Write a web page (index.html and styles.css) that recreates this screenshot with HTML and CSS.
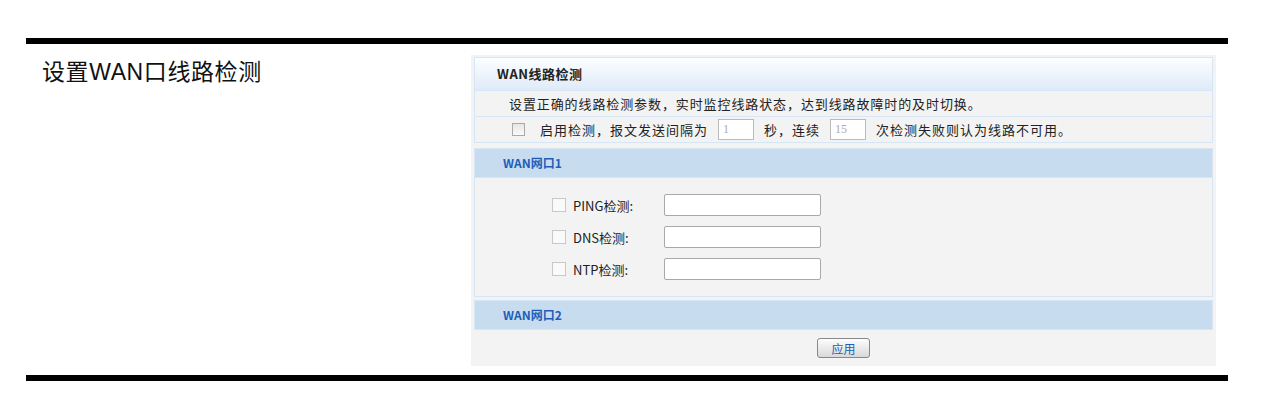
FILE: index.html
```html
<!DOCTYPE html>
<html lang="zh-CN">
<head>
    <meta charset="UTF-8">
    <title>设置WAN口线路检测</title>
    <link rel="stylesheet" href="styles.css">
</head>
<body>

    <div class="rule"></div>

    <div class="row">
        <h1 class="caption">设置WAN口线路检测</h1>

        <div class="panel">
            <div class="box">
                <div class="box-head">WAN线路检测</div>
                <div class="line desc">设置正确的线路检测参数，实时监控线路状态，达到线路故障时的及时切换。</div>
                <div class="line opts">
                    <span class="chk chk-top"></span>
                    <span>启用检测，报文发送间隔为</span>
                    <span class="num">1</span>
                    <span>秒，连续</span>
                    <span class="num">15</span>
                    <span>次检测失败则认为线路不可用。</span>
                </div>
            </div>

            <div class="band">WAN网口1</div>
            <div class="port">
                <div class="item">
                    <span class="chk"></span>
                    <span class="lbl">PING检测:</span>
                    <span class="field"></span>
                </div>
                <div class="item">
                    <span class="chk"></span>
                    <span class="lbl">DNS检测:</span>
                    <span class="field"></span>
                </div>
                <div class="item">
                    <span class="chk"></span>
                    <span class="lbl">NTP检测:</span>
                    <span class="field"></span>
                </div>
            </div>

            <div class="band band2">WAN网口2</div>

            <div class="actions">
                <button class="btn">应用</button>
            </div>
        </div>
    </div>

    <div class="rule rule-bottom"></div>

</body>
</html>
```

FILE: styles.css
```css
body {
    margin: 0;
    background-color: #fff;
    font-family: "Liberation Sans", "Noto Sans CJK SC", sans-serif;
    color: #222;
}
.rule {
    height: 6px;
    background-color: #000;
    margin: 38px 49px 0 26px;
}
.rule-bottom {
    margin-top: 9px;
}
.row {
    display: flex;
    padding-top: 11px;
}
.caption {
    width: 429px;
    margin: 3px 0 0 42px;
    font-size: 23px;
    letter-spacing: 0.6px;
    font-weight: normal;
    color: #111;
    line-height: 28px;
}
.panel {
    width: 745px;
    background-color: #f3f3f3;
    padding: 2px 0 0 0;
    font-family: "Noto Sans CJK SC", sans-serif;
    font-size: 13px;
}
.box {
    margin: 0 3px;
    border: 1px solid #d6e6f5;
}
.box-head {
    height: 32px;
    line-height: 32px;
    padding-left: 22px;
    font-weight: bold;
    font-size: 13px;
    letter-spacing: 0.5px;
    color: #222;
    background: linear-gradient(#fdfeff, #deebf8);
    border-bottom: 1px solid #d6e6f5;
}
.line {
    height: 25px;
    display: flex;
    align-items: center;
    color: #222;
}
.desc {
    padding-left: 34px;
    letter-spacing: 0.9px;
    border-bottom: 1px solid #d6e6f5;
}
.opts {
    height: 25px;
    padding-left: 37px;
    gap: 7px;
    letter-spacing: 1px;
}
.opts .chk-top {
    width: 11px;
    height: 11px;
    margin-right: 8px;
    border: 1px solid #aaa;
    background: linear-gradient(#e6e6e6, #fafafa);
}
.num {
    width: 30px;
    height: 19px;
    border: 1px solid #bbb;
    background-color: #fff;
    color: #aaa;
    font-family: "Liberation Serif", serif;
    font-size: 12px;
    letter-spacing: 0;
    line-height: 19px;
    padding-left: 4px;
    margin: 0 3px;
}
.band {
    margin: 5px 3px 0;
    height: 28px;
    line-height: 28px;
    padding-left: 28px;
    background-color: #c8dcef;
    border: 1px solid #d8e6f3;
    color: #1d5fb8;
    font-weight: bold;
    font-size: 12px;
}
.port {
    margin: 0 3px;
    height: 119px;
    border: 1px solid #d6e6f5;
    border-top: none;
    padding-top: 16px;
    box-sizing: border-box;
    display: flex;
    flex-direction: column;
    gap: 10px;
}
.item {
    display: flex;
    align-items: center;
    height: 22px;
    padding-left: 77px;
}
.chk {
    width: 12px;
    height: 12px;
    border: 1px solid #c8c8c8;
    background-color: #fafafa;
    flex-shrink: 0;
}
.lbl {
    width: 91px;
    margin-left: 7px;
    color: #222;
    font-size: 13px;
}
.field {
    width: 155px;
    height: 20px;
    border: 1px solid #a9a9a9;
    border-radius: 2px;
    background-color: #fff;
}
.band2 {
    margin-top: 3px;
}
.actions {
    height: 36px;
    display: flex;
    justify-content: center;
    align-items: center;
}
.btn {
    width: 53px;
    height: 20px;
    padding: 0;
    border: 1px solid #888;
    border-radius: 3px;
    background: linear-gradient(#fdfdfd, #d9d9d9);
    color: #1d5fb8;
    font-family: "Noto Sans CJK SC", sans-serif;
    font-size: 12px;
}
```
